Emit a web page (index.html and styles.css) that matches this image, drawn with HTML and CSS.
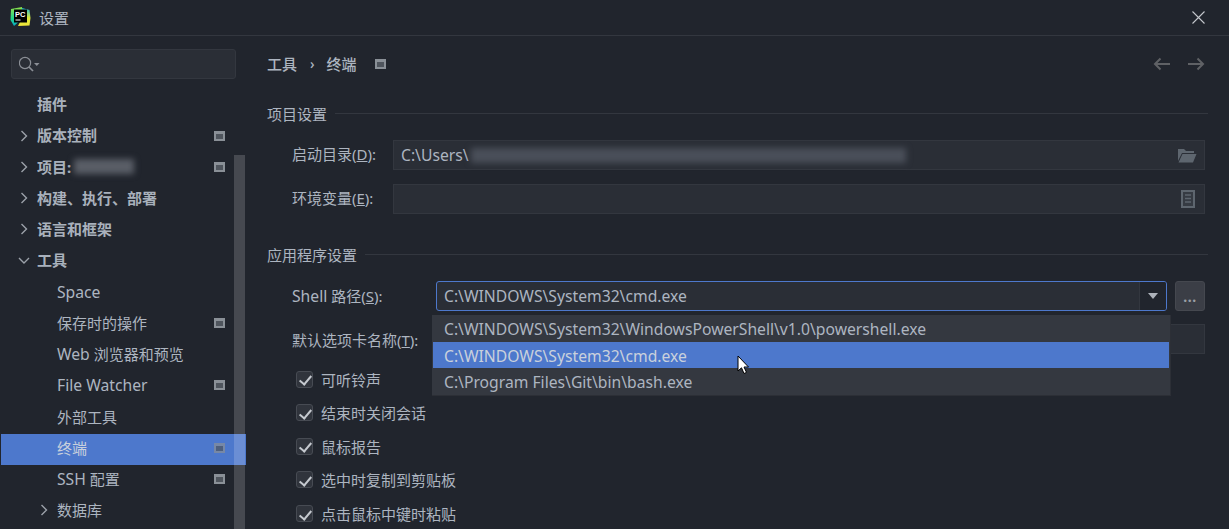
FILE: index.html
```html
<!DOCTYPE html>
<html lang="zh-CN">
<head>
    <meta charset="UTF-8">
    <title>设置</title>
    <link rel="stylesheet" href="styles.css">
</head>
<body>
<div class="window">
    <header class="titlebar">
        <svg class="logo" width="22" height="22" viewBox="0 0 22 22">
            <defs>
                <linearGradient id="pcLeft" x1="0" y1="0" x2="0" y2="1">
                    <stop offset="0" stop-color="#8fe04a"/>
                    <stop offset="0.6" stop-color="#21d789"/>
                    <stop offset="1" stop-color="#08a8c8"/>
                </linearGradient>
                <linearGradient id="pcRight" x1="0" y1="0" x2="0" y2="1">
                    <stop offset="0" stop-color="#1fb8d8"/>
                    <stop offset="0.55" stop-color="#d8e83a"/>
                    <stop offset="1" stop-color="#f2e63a"/>
                </linearGradient>
            </defs>
            <path d="M1 3 L12 1 L13 12 L4 20 L0.5 14 Z" fill="url(#pcLeft)"/>
            <path d="M12 2 L19.5 4 L20.5 12 L19.5 19.5 L8 20 L12 12 Z" fill="url(#pcRight)"/>
            <rect x="4" y="3.5" width="13" height="13" fill="#000"/>
            <text x="5" y="10.5" class="logo-text">PC</text>
            <rect x="5.5" y="13.5" width="5" height="1" fill="#fff"/>
        </svg>
        <span class="window-title">设置</span>
        <svg class="close" width="13" height="13" viewBox="0 0 13 13">
            <path d="M0.5 0.5 L12.5 12.5 M12.5 0.5 L0.5 12.5" stroke="#c4c7cc" stroke-width="1.1" fill="none"/>
        </svg>
    </header>

    <div class="content">
        <aside class="sidebar">
            <div class="search">
                <svg width="21" height="16" viewBox="0 0 21 16">
                    <circle cx="6" cy="7" r="5.6" stroke="#8b8f96" stroke-width="1.2" fill="none"/>
                    <path d="M10 11 L14 15" stroke="#8b8f96" stroke-width="1.7"/>
                    <path d="M15 7 H20.5 L17.8 10 Z" fill="#8b8f96"/>
                </svg>
            </div>
            <div class="scrollbar"></div>
            <ul class="tree">
                <li class="row top"><span class="label">插件</span></li>
                <li class="row top"><svg class="arrow" width="9" height="12" viewBox="0 0 9 12"><path d="M1.5 1 L6.5 6 L1.5 11" class="chevron"/></svg><span class="label">版本控制</span><span class="tag"></span></li>
                <li class="row top"><svg class="arrow" width="9" height="12" viewBox="0 0 9 12"><path d="M1.5 1 L6.5 6 L1.5 11" class="chevron"/></svg><span class="label">项目:</span><span class="blur-name"></span><span class="tag"></span></li>
                <li class="row top"><svg class="arrow" width="9" height="12" viewBox="0 0 9 12"><path d="M1.5 1 L6.5 6 L1.5 11" class="chevron"/></svg><span class="label">构建、执行、部署</span></li>
                <li class="row top"><svg class="arrow" width="9" height="12" viewBox="0 0 9 12"><path d="M1.5 1 L6.5 6 L1.5 11" class="chevron"/></svg><span class="label">语言和框架</span></li>
                <li class="row top"><svg class="arrow open" width="12" height="9" viewBox="0 0 12 9"><path d="M1 2 L6 7 L11 2" class="chevron"/></svg><span class="label">工具</span></li>
                <li class="row sub"><span class="label latin">Space</span></li>
                <li class="row sub"><span class="label">保存时的操作</span><span class="tag"></span></li>
                <li class="row sub"><span class="label"><span class="latin">Web</span> 浏览器和预览</span></li>
                <li class="row sub"><span class="label latin">File Watcher</span><span class="tag"></span></li>
                <li class="row sub"><span class="label">外部工具</span></li>
                <li class="row sub selected"><span class="label">终端</span><span class="tag"></span></li>
                <li class="row sub"><span class="label"><span class="latin">SSH</span> 配置</span><span class="tag"></span></li>
                <li class="row sub nested"><svg class="arrow" width="9" height="12" viewBox="0 0 9 12"><path d="M1.5 1 L6.5 6 L1.5 11" class="chevron"/></svg><span class="label">数据库</span></li>
            </ul>
        </aside>

        <main class="panel">
            <div class="breadcrumb">
                <span class="crumb">工具</span>
                <span class="crumb-sep">›</span>
                <span class="crumb">终端</span>
                <span class="tag crumb-tag"></span>
                <svg class="nav-arrows" width="52" height="14" viewBox="0 0 52 14">
                    <path d="M17 7 H2 M7.5 1.5 L2 7 L7.5 12.5" class="nav-arrow"/>
                    <path d="M35 7 H50 M44.5 1.5 L50 7 L44.5 12.5" class="nav-arrow"/>
                </svg>
            </div>

            <div class="section-title first"><span>项目设置</span><i></i></div>
            <div class="field-row">
                <label class="field-label">启动目录(<u>D</u>):</label>
                <div class="field">
                    <span class="latin">C:\Users\</span><span class="blur-path"></span>
                    <svg class="field-icon" width="20" height="15" viewBox="0 0 20 15">
                        <path d="M1 1 H7 L9 3 H17 V5 H5 L1 13 Z" fill="#5e666f"/>
                        <path d="M5.5 6 H19.5 L16 14.5 H1.5 Z" fill="#5e666f"/>
                    </svg>
                </div>
            </div>
            <div class="field-row second">
                <label class="field-label">环境变量(<u>E</u>):</label>
                <div class="field">
                    <svg class="field-icon doc" width="14" height="18" viewBox="0 0 14 18">
                        <rect x="1" y="1" width="12" height="16" fill="#363b43" stroke="#5e666f" stroke-width="2"/>
                        <path d="M4 5 H10 M4 8.5 H10 M4 12 H10" stroke="#5e666f" stroke-width="1.4"/>
                    </svg>
                </div>
            </div>

            <div class="section-title"><span>应用程序设置</span><i></i></div>
            <div class="shell-row">
                <label class="shell-label"><span class="latin">Shell</span> 路径(<u>S</u>):</label>
                <div class="combo">
                    <span class="combo-value latin">C:\WINDOWS\System32\cmd.exe</span>
                    <span class="combo-button"><i></i></span>
                </div>
                <button class="more">...</button>
            </div>
            <div class="tab-row">
                <label class="shell-label">默认选项卡名称(<u>T</u>):</label>
                <div class="field tab-field"></div>
            </div>
            <ul class="checks">
                <li><span class="check"></span>可听铃声</li>
                <li><span class="check"></span>结束时关闭会话</li>
                <li><span class="check"></span>鼠标报告</li>
                <li><span class="check"></span>选中时复制到剪贴板</li>
                <li><span class="check"></span>点击鼠标中键时粘贴</li>
            </ul>

            <ul class="dropdown latin">
                <li>C:\WINDOWS\System32\WindowsPowerShell\v1.0\powershell.exe</li>
                <li class="active">C:\WINDOWS\System32\cmd.exe</li>
                <li>C:\Program Files\Git\bin\bash.exe</li>
            </ul>
            <svg class="cursor" width="14" height="20" viewBox="0 0 14 20">
                <path d="M1 1 V16 L4.5 12.8 L7 18.5 L9.5 17.4 L7 12 H11.5 Z" fill="#fff" stroke="#000" stroke-width="1"/>
            </svg>
        </main>
    </div>
</div>
</body>
</html>
```

FILE: styles.css
```css
:root {
    --bg: #21252d;
    --field: #2a2e36;
    --field-border: #33373f;
    --line: #33373f;
    --text: #adb5c0;
    --accent: #4d78cc;
    --popup: #343840;
    --icon: #6b7178;
}

* {
    margin: 0;
    padding: 0;
    box-sizing: border-box;
}

body {
    width: 1229px;
    height: 529px;
    overflow: hidden;
    background-color: var(--bg);
    color: var(--text);
    font-family: "Noto Sans", "Noto Sans CJK SC", sans-serif;
    font-size: 15px;
}

ul {
    list-style: none;
}

.latin {
    font-size: 15.7px;
}

.window {
    height: 529px;
    display: flex;
    flex-direction: column;
}

.titlebar {
    height: 36px;
    flex: none;
    display: flex;
    align-items: center;
    padding: 0 24px 1px 10px;
    border-bottom: 1px solid #33373f;
}

.logo {
    margin-right: 7px;
}

.logo-text {
    font-family: "Liberation Sans", sans-serif;
    font-size: 7.5px;
    font-weight: 700;
    fill: #fff;
}

.close {
    margin-left: auto;
}

.content {
    flex: 1;
    display: flex;
    min-height: 0;
}

/* left tree */
.sidebar {
    width: 246px;
    flex: none;
    position: relative;
    padding: 13px 0 0 1px;
}

.search {
    margin: 0 10px;
    height: 30px;
    width: 225px;
    display: flex;
    align-items: center;
    padding-left: 7px;
    background-color: var(--field);
    border: 1px solid var(--field-border);
    border-radius: 3px;
}

.scrollbar {
    position: absolute;
    z-index: 1;
    left: 234px;
    top: 119px;
    bottom: 0;
    width: 11px;
    background-color: rgba(255, 255, 255, 0.17);
}

.tree {
    margin-top: 11.6px;
}

.row {
    height: 31.2px;
    display: flex;
    align-items: center;
    position: relative;
    padding-left: 36px;
    padding-bottom: 3px;
    line-height: 20px;
}

.row.top {
    padding-bottom: 4px;
    font-weight: 700;
    color: #a9b1bc;
}

.row.sub {
    padding-left: 56px;
}

.row.selected {
    background-color: var(--accent);
    color: #c8d0dc;
}

.row.selected .tag {
    opacity: 0.7;
}

.arrow {
    position: absolute;
    left: 19px;
    top: 8px;
}

.arrow.open {
    left: 17px;
    top: 9px;
}

.nested .arrow {
    left: 39px;
}

.chevron {
    fill: none;
    stroke: #9ba1a9;
    stroke-width: 1.4;
}

.blur-name {
    width: 60px;
    height: 15px;
    margin-left: 3px;
    background-color: #5a5e67;
    filter: blur(3px);
}

.tag {
    position: absolute;
    left: 213px;
    top: 9px;
    width: 11px;
    height: 10px;
    border: 2px solid #8a9097;
    border-top-width: 3px;
    background-color: #4f555d;
}

/* right panel */
.panel {
    flex: 1;
    position: relative;
    padding: 0 24px 0 21px;
}

.breadcrumb {
    height: 31px;
    margin-top: 12px;
    display: flex;
    align-items: center;
    font-weight: 500;
}

.crumb-sep {
    margin: 0 12px 0 13px;
    font-size: 14px;
}

.crumb-tag {
    position: static;
    margin-left: 18px;
}

.nav-arrows {
    margin-left: auto;
}

.nav-arrow {
    fill: none;
    stroke: #5f6165;
    stroke-width: 2;
}

.section-title {
    display: flex;
    align-items: center;
    height: 20px;
    margin-top: 30px;
}

.section-title.first {
    margin-top: 24px;
}

.section-title i {
    flex: 1;
    height: 1px;
    margin-left: 8px;
    margin-right: -3px;
    background-color: var(--line);
}

.field-row {
    display: flex;
    align-items: center;
    margin-top: 17px;
    padding-left: 25px;
}

.field-row.second {
    margin-top: 14px;
}

.field-label {
    width: 101px;
    flex: none;
    padding-bottom: 4px;
}

.field {
    flex: 1;
    height: 30px;
    position: relative;
    display: flex;
    align-items: center;
    padding-left: 7px;
    background-color: var(--field);
    border: 1px solid var(--field-border);
}

.field-icon {
    position: absolute;
    right: 7px;
    top: 7px;
}

.field-icon.doc {
    right: 9px;
    top: 5px;
}

.blur-path {
    width: 435px;
    height: 15px;
    margin-left: 2px;
    background-color: #4a4f59;
    filter: blur(3px);
}

.shell-row {
    display: flex;
    align-items: center;
    margin-top: 17px;
    padding-left: 25px;
}

.shell-label {
    width: 144px;
    flex: none;
}

.combo {
    width: 731px;
    height: 30px;
    display: flex;
    align-items: center;
    padding-left: 7px;
    background-color: var(--field);
    border: 1px solid var(--accent);
    border-radius: 3px;
}

.combo-value {
    flex: 1;
}

.combo-button {
    width: 27px;
    height: 100%;
    display: flex;
    align-items: center;
    justify-content: center;
    background-color: var(--bg);
    border-left: 1px solid var(--field-border);
    border-radius: 0 2px 2px 0;
}

.combo-button i {
    width: 0;
    height: 0;
    border-left: 5.5px solid transparent;
    border-right: 5.5px solid transparent;
    border-top: 6px solid #aeb3bb;
}

.more {
    width: 30px;
    height: 30px;
    margin-left: 8px;
    font-family: inherit;
    font-size: 14px;
    font-weight: 700;
    letter-spacing: 0.5px;
    color: #9a9ea5;
    background-color: #3b3e46;
    border: 1px solid #45484f;
    border-radius: 3px;
}

.tab-row {
    display: flex;
    align-items: center;
    margin-top: 13px;
    padding-left: 25px;
}

.tab-field {
    height: 30px;
}

.checks {
    margin-top: 8.4px;
    padding-left: 29px;
}

.checks li {
    height: 33.6px;
    display: flex;
    align-items: center;
}

.check {
    width: 17px;
    height: 17px;
    margin-right: 8px;
    position: relative;
    background-color: #30343c;
    border: 1px solid #474b53;
    border-radius: 3px;
}

.check::after {
    content: "";
    position: absolute;
    left: 5px;
    top: 1.5px;
    width: 5px;
    height: 10px;
    border: solid #c5c9cf;
    border-width: 0 2px 2px 0;
    transform: rotate(40deg);
}

/* popup list of the combo */
.dropdown {
    position: absolute;
    left: 186px;
    top: 279px;
    width: 739px;
    height: 81px;
    padding: 0 1px;
    background-color: var(--popup);
    border: 0 solid #2c2f36;
    border-width: 0 1px 1px 0;
}

.dropdown li {
    height: 26.7px;
    line-height: 26.7px;
    padding: 1px 0 0 11px;
}

.dropdown .active {
    background-color: var(--accent);
    color: #c9d1dc;
}

.cursor {
    position: absolute;
    left: 491px;
    top: 319px;
}
```
